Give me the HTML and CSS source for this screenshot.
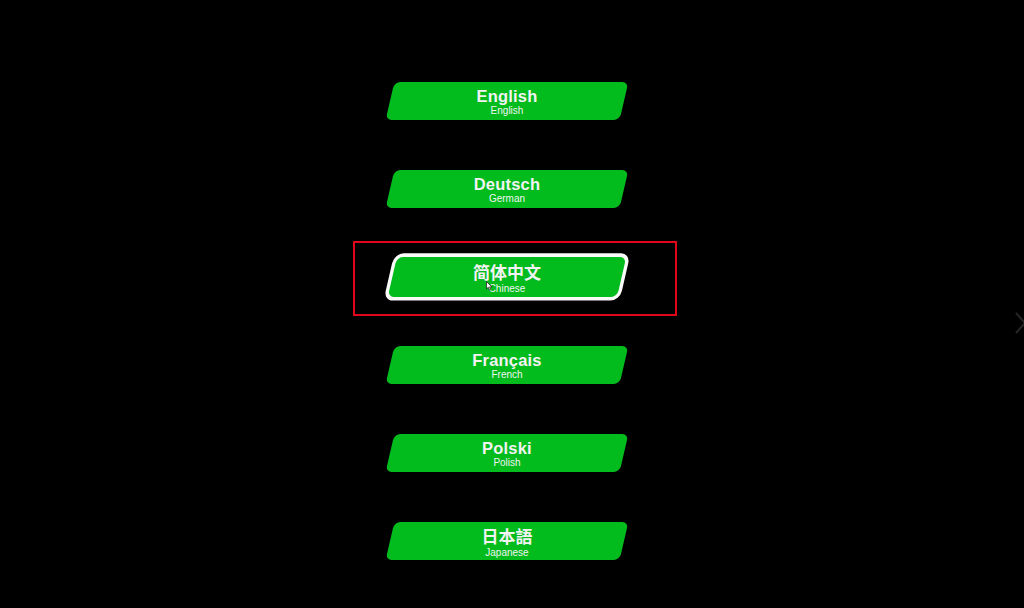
FILE: index.html
```html
<!DOCTYPE html>
<html lang="en">
<head>
<meta charset="utf-8">
<title>Language</title>
<link rel="stylesheet" href="styles.css">
</head>
<body>
<main class="screen">
  <ul class="lang-list">
    <li class="lang"><span class="title">English</span><span class="sub">English</span></li>
    <li class="lang"><span class="title">Deutsch</span><span class="sub">German</span></li>
    <li class="lang selected">
      <span class="focus-ring"></span>
      <span class="title cjk">简体中文</span><span class="sub">Chinese</span>
      <svg class="cursor" width="7" height="10" viewBox="0 0 7 10"><path d="M0.5 0.5 L0.5 8 L2.3 6.3 L3.6 9.2 L4.8 8.7 L3.6 5.9 L6 5.9 Z" fill="#fff" stroke="#222" stroke-width="0.8"/></svg>
    </li>
    <li class="lang"><span class="title">Français</span><span class="sub">French</span></li>
    <li class="lang"><span class="title">Polski</span><span class="sub">Polish</span></li>
    <li class="lang"><span class="title cjk">日本語</span><span class="sub">Japanese</span></li>
  </ul>
  <svg class="next" width="10" height="24" viewBox="0 0 10 24"><polyline points="1,1 10,11 1,21" fill="none" stroke="#262626" stroke-width="2"/></svg>
</main>
</body>
</html>
```
FILE: styles.css
```css
html, body {
  margin: 0;
  padding: 0;
  background: #000;
  height: 100%;
  overflow: hidden;
}
.screen {
  position: relative;
  width: 1024px;
  height: 608px;
  font-family: "Liberation Sans", Arial, "Noto Sans CJK SC", sans-serif;
}
.lang-list {
  list-style: none;
  margin: 0;
  padding: 82px 10px 0 0;
  display: flex;
  flex-direction: column;
  align-items: center;
  gap: 50px;
}
.lang {
  position: relative;
  box-sizing: border-box;
  width: 234px;
  height: 38px;
  padding-top: 2px;
  display: flex;
  flex-direction: column;
  align-items: center;
  justify-content: center;
  color: #f3f3f3;
}
.lang::before {
  content: "";
  position: absolute;
  inset: 0;
  background: #02bb1c;
  border-radius: 6px;
  transform: skewX(-13deg);
  z-index: 0;
}
.title, .sub {
  position: relative;
  z-index: 1;
  white-space: nowrap;
}
.title {
  font-size: 16.5px;
  font-weight: bold;
  line-height: 16px;
  letter-spacing: 0.2px;
}
.title.cjk {
  font-size: 17px;
  letter-spacing: 0;
  padding-top: 3px;
}
.sub {
  font-size: 10px;
  line-height: 11px;
  margin-top: 1px;
}
.selected::before {
  transform: skewX(-13deg) scale(0.98, 1.05);
  box-shadow: 0 0 0 3.5px #fafafa;
}
.focus-ring {
  position: absolute;
  left: -37px;
  top: -17px;
  width: 320px;
  height: 71px;
  border: 2px solid #e0061b;
  z-index: 2;
}
.cursor {
  position: absolute;
  left: 96px;
  top: 23px;
  z-index: 3;
}
.next {
  position: absolute;
  left: 1015px;
  top: 312px;
}
```
